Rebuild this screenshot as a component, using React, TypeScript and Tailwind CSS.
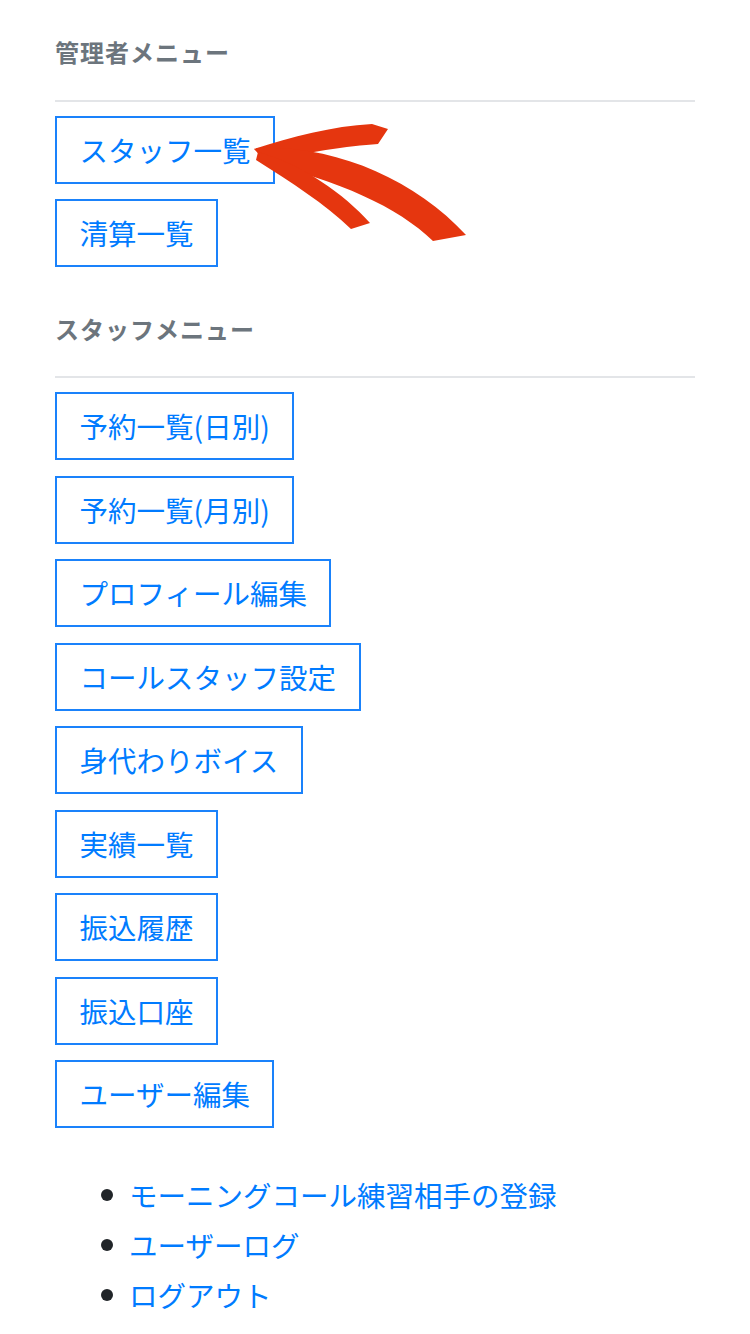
const adminMenu = ['スタッフ一覧', '清算一覧'];

const staffMenu = [
  '予約一覧(日別)',
  '予約一覧(月別)',
  'プロフィール編集',
  'コールスタッフ設定',
  '身代わりボイス',
  '実績一覧',
  '振込履歴',
  '振込口座',
  'ユーザー編集',
];

const links = ['モーニングコール練習相手の登録', 'ユーザーログ', 'ログアウト'];

function MenuHeader({ title }: { title: string }) {
  return (
    <>
      <h5 className="text-[24px] leading-[36px] font-bold tracking-[1px] text-[#6c757d]">{title}</h5>
      <div className="mt-[30px] h-[2px] bg-[#e3e5e8]" />
    </>
  );
}

function MenuButton({ label }: { label: string }) {
  return (
    <a
      href="#"
      className="self-start border-2 border-[#1a82fb] px-[22.5px] py-[11px] text-[28.5px] leading-[42px] text-[#007bff]"
    >
      {label}
    </a>
  );
}

function RedArrow() {
  return (
    <svg
      className="pointer-events-none absolute left-0 top-0"
      width="750"
      height="300"
      viewBox="0 0 750 300"
    >
      <g fill="#e5360f">
        {/* upper barb */}
        <path d="M254,149 C292,137 332,126 372,124 L388,129 L378,144 C348,146 306,152 266,162 Z" />
        {/* shaft */}
        <path d="M256,148 C332,144 414,178 466,235 L433,241 C398,207 338,180 262,163 Z" />
        {/* lower barb */}
        <path d="M258,152 C302,164 344,194 370,223 L351,229 C324,203 292,183 256,160 Z" />
      </g>
    </svg>
  );
}

export default function App() {
  return (
    <div
      className="relative min-h-[1334px] bg-white px-[55px] pt-[34px]"
      style={{ fontFamily: '"Noto Sans CJK JP", "Noto Sans", sans-serif' }}
    >
      <MenuHeader title="管理者メニュー" />
      <div className="mt-[14px] flex flex-col gap-[15px]">
        {adminMenu.map((item) => (
          <MenuButton key={item} label={item} />
        ))}
      </div>

      <div className="mt-[44px]">
        <h5 className="text-[24px] leading-[36px] font-bold tracking-[1px] text-[#6c757d]">スタッフメニュー</h5>
        <div className="mt-[29px] h-[2px] bg-[#e3e5e8]" />
      </div>
      <div className="mt-[14px] flex flex-col gap-[15.5px]">
        {staffMenu.map((item) => (
          <MenuButton key={item} label={item} />
        ))}
      </div>

      <ul className="mt-[42px] pl-[46px]">
        {links.map((link) => (
          <li key={link} className="flex items-center gap-[16px] text-[28.5px] leading-[50px]">
            <span className="h-[12px] w-[12px] shrink-0 rounded-full bg-[#212529]" />
            <a href="#" className="text-[#007bff]">
              {link}
            </a>
          </li>
        ))}
      </ul>

      <RedArrow />
    </div>
  );
}
